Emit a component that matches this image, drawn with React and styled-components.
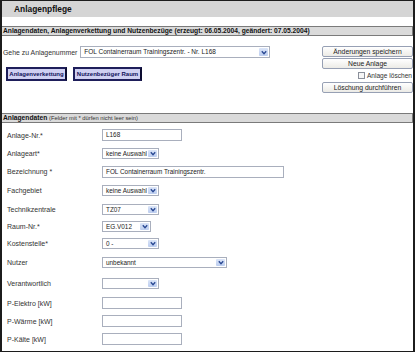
import styled, { createGlobalStyle } from "styled-components";

const GlobalStyle = createGlobalStyle`
  body {
    margin: 0;
    background: #fff;
    font-family: "Liberation Sans", Arial, sans-serif;
  }
`;

const rows = [
  { label: "Anlage-Nr.*", kind: "input", value: "L168", width: 80, h: 18 },
  { label: "Anlageart*", kind: "select", value: "keine Auswahl", width: 57, h: 18 },
  { label: "Bezeichnung *", kind: "input", value: "FOL Containerraum Trainingszentr.", width: 182, h: 19 },
  { label: "Fachgebiet", kind: "select", value: "keine Auswahl", width: 57, h: 19 },
  { label: "Technikzentrale", kind: "select", value: "TZ07", width: 57, h: 18.5 },
  { label: "Raum-Nr.*", kind: "select", value: "EG.V012", width: 49, h: 15.5 },
  { label: "Kostenstelle*", kind: "select", value: "0 -", width: 57, h: 18 },
  { label: "Nutzer", kind: "select", value: "unbekannt", width: 125, h: 20.5 },
  { label: "Verantwortlich", kind: "select", value: "", width: 57, h: 21.5 },
  { label: "P-Elektro [kW]", kind: "input", value: "", width: 80, h: 18 },
  { label: "P-Wärme [kW]", kind: "input", value: "", width: 80, h: 18 },
  { label: "P-Kälte [kW]", kind: "input", value: "", width: 80, h: 18 },
];

const Arrow = () => (
  <ArrowBox>
    <svg width="6" height="5" viewBox="0 0 6 5">
      <path d="M0.8 1.2 L3 3.6 L5.2 1.2" fill="none" stroke="#2b4a94" strokeWidth="1.4" />
    </svg>
  </ArrowBox>
);

const Select = ({ value, width, height = 11, size = 6.4 }) => (
  <SelectBox style={{ width }} $h={height}>
    <SelectValue $size={size}>{value}</SelectValue>
    <Arrow />
  </SelectBox>
);

export default function App() {
  return (
    <>
      <GlobalStyle />
      <Frame>
        <TitleBar>Anlagenpflege</TitleBar>

        <SectionBar $top={9}>
          Anlagendaten, Anlagenverkettung und Nutzenbezüge (erzeugt: 06.05.2004, geändert: 07.05.2004)
        </SectionBar>

        <TopArea>
          <LeftCol>
            <GotoRow>
              <Label>Gehe zu Anlagenummer</Label>
              <Select value="FOL Containerraum Trainingszentr. - Nr. L168" width={190} height={12} size={6.5} />
            </GotoRow>
            <NavButtons>
              <NavButton $w={61}>Anlagenverkettung</NavButton>
              <NavButton $w={69}>Nutzenbezüger Raum</NavButton>
            </NavButtons>
          </LeftCol>
          <RightCol>
            <ActionButton>Änderungen speichern</ActionButton>
            <ActionButton>Neue Anlage</ActionButton>
            <CheckLine>
              <CheckBox />
              Anlage löschen
            </CheckLine>
            <ActionButton>Löschung durchführen</ActionButton>
          </RightCol>
        </TopArea>

        <SectionBar $top={11}>
          Anlagendaten <Small>(Felder mit * dürfen nicht leer sein)</Small>
        </SectionBar>

        <Form>
          {rows.map((r) => (
            <FormRow key={r.label} $h={r.h}>
              <FieldLabel>{r.label}</FieldLabel>
              {r.kind === "input" ? (
                <TextBox style={{ width: r.width }}>{r.value}</TextBox>
              ) : (
                <Select value={r.value} width={r.width} />
              )}
            </FormRow>
          ))}
        </Form>
      </Frame>
    </>
  );
}

const Frame = styled.div`
  box-sizing: border-box;
  width: 415px;
  height: 352px;
  border: 2px solid #1c1c1c;
  border-top-width: 1px;
  border-bottom-width: 1px;
  overflow: hidden;
  background: #fff;
`;

const TitleBar = styled.div`
  height: 16px;
  background: #d5d5d5;
  padding-left: 12px;
  font-size: 8.4px;
  font-weight: bold;
  line-height: 16px;
  color: #111;
`;

const SectionBar = styled.div`
  box-sizing: border-box;
  margin-top: ${(p) => p.$top}px;
  height: 10px;
  background: #dadada;
  border: 1px solid #7a7a7a;
  border-left: none;
  padding-left: 1px;
  font-size: 6.7px;
  font-weight: bold;
  line-height: 8px;
  color: #111;
  white-space: nowrap;
`;

const Small = styled.span`
  font-weight: normal;
  font-size: 5.8px;
  color: #333;
`;

const TopArea = styled.div`
  display: flex;
  justify-content: space-between;
  padding: 10px 0 0 1px;
  height: 56px;
`;

const LeftCol = styled.div`
  display: flex;
  flex-direction: column;
`;

const GotoRow = styled.div`
  display: flex;
  align-items: center;
  gap: 3px;
`;

const Label = styled.span`
  font-size: 6.9px;
  color: #333;
`;

const NavButtons = styled.div`
  display: flex;
  gap: 6px;
  margin-top: 9px;
  padding-left: 3px;
`;

const NavButton = styled.div`
  box-sizing: border-box;
  width: ${(p) => p.$w}px;
  height: 14px;
  background: #cfd0f2;
  border: 2px solid #1e1e5a;
  border-right-color: #0c0c30;
  font-size: 6px;
  font-weight: bold;
  color: #10105a;
  line-height: 10px;
  text-align: center;
  white-space: nowrap;
`;

const RightCol = styled.div`
  display: flex;
  flex-direction: column;
  align-items: flex-end;
  gap: 1px;
  width: 93px;
`;

const ActionButton = styled.div`
  box-sizing: border-box;
  width: 91px;
  height: 11px;
  border: 1px solid #97a0b4;
  border-radius: 2px;
  background: linear-gradient(#ffffff, #ecebe6);
  font-size: 6.8px;
  line-height: 9px;
  text-align: center;
  color: #222;
`;

const CheckLine = styled.div`
  display: flex;
  align-items: center;
  gap: 2px;
  height: 11px;
  padding-right: 1px;
  font-size: 6.6px;
  color: #333;
  white-space: nowrap;
`;

const CheckBox = styled.span`
  box-sizing: border-box;
  width: 7px;
  height: 7px;
  border: 1px solid #8a8f9a;
  background: #f6f6f6;
`;

const Form = styled.div`
  display: flex;
  flex-direction: column;
  padding-top: 3px;
`;

const FormRow = styled.div`
  display: grid;
  grid-template-columns: 95px auto;
  align-items: center;
  height: ${(p) => p.$h}px;
  padding-left: 5px;
`;

const FieldLabel = styled.span`
  font-size: 7px;
  color: #333;
`;

const TextBox = styled.div`
  box-sizing: border-box;
  height: 12px;
  border: 1px solid #a9afbd;
  padding-left: 3px;
  font-size: 6.4px;
  line-height: 10px;
  color: #222;
  white-space: nowrap;
  overflow: hidden;
`;

const SelectBox = styled.div`
  box-sizing: border-box;
  display: flex;
  align-items: stretch;
  height: ${(p) => p.$h}px;
  border: 1px solid #a9afbd;
  background: #fff;
`;

const SelectValue = styled.span`
  flex: 1;
  padding-left: 3px;
  font-size: ${(p) => p.$size}px;
  line-height: 9px;
  color: #222;
  white-space: nowrap;
  overflow: hidden;
`;

const ArrowBox = styled.span`
  display: flex;
  align-items: center;
  justify-content: center;
  width: 9px;
  margin: 1px;
  background: linear-gradient(#dbe5f8, #bccdef);
  border-radius: 1px;
`;
